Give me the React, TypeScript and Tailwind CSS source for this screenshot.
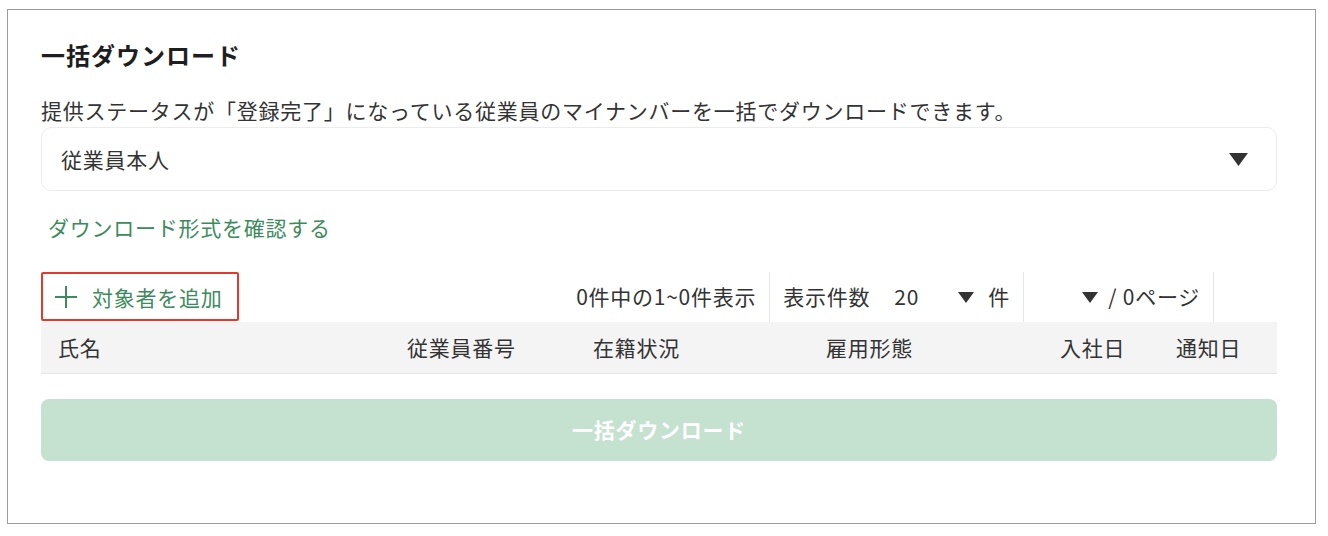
import * as React from "react"

const columns = [
  { label: "氏名", w: "w-[349px]" },
  { label: "従業員番号", w: "w-[186px]" },
  { label: "在籍状況", w: "w-[233px]" },
  { label: "雇用形態", w: "w-[234px]" },
  { label: "入社日", w: "w-[116px]" },
  { label: "通知日", w: "w-[118px]" },
]

function Caret({ className }: { className?: string }) {
  return (
    <svg viewBox="0 0 16 11" className={className} aria-hidden="true">
      <polygon points="0,0 16,0 8,11" fill="currentColor" />
    </svg>
  )
}

function PlusIcon() {
  return (
    <svg viewBox="0 0 22 22" className="h-[22px] w-[22px] text-[#3d8b5d]" aria-hidden="true">
      <path d="M11 0v22M0 11h22" stroke="currentColor" strokeWidth="2" fill="none" />
    </svg>
  )
}

export default function App() {
  return (
    <div className="min-h-[536px] bg-white pt-[9px] pl-[7px] font-['Noto_Sans_CJK_JP','Noto_Sans',sans-serif] tracking-[0.75px] text-[#333]">
      <section className="h-[515px] w-[1309px] border border-[#9c9c9c] pt-[29px] pl-[33px] pr-[38px]">
        <h2 className="text-[24px] font-bold leading-[32px] tracking-[1px] text-[#1e1e1e]">一括ダウンロード</h2>

        <p className="mt-[25px] text-[21px] leading-[28px]">
          提供ステータスが「登録完了」になっている従業員のマイナンバーを一括でダウンロードできます。
        </p>

        {/* Target select */}
        <div className="mt-[3px] flex h-[64px] items-center justify-between rounded-[10px] border border-[#ececec] pl-[19px] pr-[28px]">
          <span className="text-[21px] leading-[28px]">従業員本人</span>
          <Caret className="h-[13px] w-[19px] text-[#333]" />
        </div>

        <a className="mt-[22px] block pl-[7px] text-[21px] leading-[28px] text-[#3d8b5d]">
          ダウンロード形式を確認する
        </a>

        {/* Toolbar */}
        <div className="mt-[31px] flex h-[50px] items-stretch justify-between">
          <button className="flex h-[49px] w-[198px] items-center gap-[15px] rounded-[2px] border-2 border-[#e4382c] pl-[12px] text-[21px] tracking-[0.75px] text-[#3d8b5d]">
            <PlusIcon />
            <span className="leading-[28px]">対象者を追加</span>
          </button>

          <div className="flex items-stretch text-[21px]">
            <div className="flex items-center pr-[13px]">0件中の1~0件表示</div>
            <div className="flex items-center border-l border-[#e6e6e6] pl-[13px] pr-[13px]">
              <span>表示件数</span>
              <span className="ml-[24px] w-[64px]">20</span>
              <Caret className="h-[11px] w-[16px] text-[#333]" />
              <span className="ml-[14px]">件</span>
            </div>
            <div className="flex w-[190px] items-center justify-end border-l border-[#e6e6e6] pr-[13px]">
              <Caret className="h-[11px] w-[16px] text-[#333]" />
              <span className="ml-[10px]">/ 0ページ</span>
            </div>
            <div className="w-[64px] border-l border-[#e6e6e6]" />
          </div>
        </div>

        {/* Table header */}
        <div className="flex h-[52px] items-center border-b border-[#e6e6e6] bg-[#f4f4f4] text-[21px]">
          {columns.map((c) => (
            <div key={c.label} className={`${c.w} pl-[17px]`}>
              {c.label}
            </div>
          ))}
        </div>

        <button
          disabled
          className="mt-[25px] flex h-[62px] w-full items-center justify-center rounded-[8px] bg-[#c5e1cf] text-[21px] font-bold tracking-[0.75px] text-white"
        >
          一括ダウンロード
        </button>
      </section>
    </div>
  )
}
